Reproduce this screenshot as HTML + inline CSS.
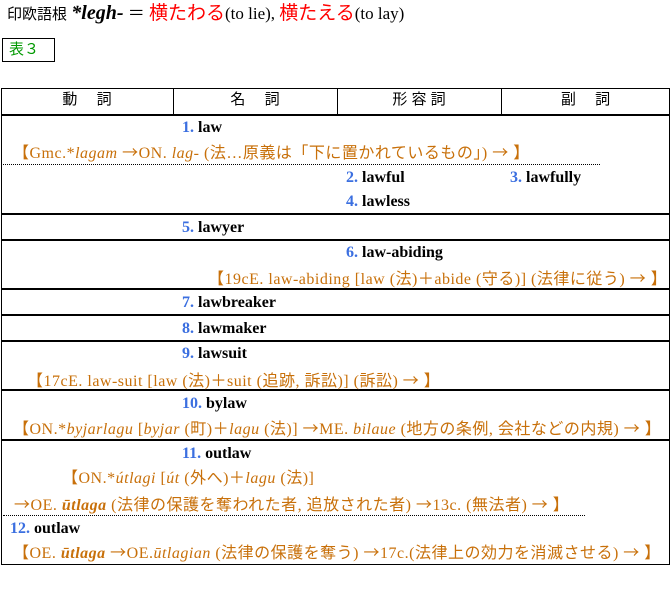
<!DOCTYPE html>
<html><head><meta charset="utf-8"><style>
body{margin:0;width:672px;height:615px;background:#fff;position:relative;font-family:"Liberation Serif","Noto Sans CJK JP",serif;overflow:hidden}
.a{position:absolute;white-space:nowrap;font-size:16px;line-height:16px}
.g{font-family:"Liberation Sans","Noto Sans CJK JP",sans-serif}
.r{font-family:"Noto Sans CJK JP",sans-serif;font-style:normal}
.o{color:#c8700a;font-size:16px;letter-spacing:0.5px}
.n{color:#3b6fe0;font-weight:bold}
.b{font-weight:bold;color:#000}
.h{position:absolute;left:1px;width:669px;border-top:2px solid #000}
.v{position:absolute;top:88px;height:27px;border-left:1.5px solid #000}
.d{position:absolute;border-top:1px dotted #000;height:0}
.hd{position:absolute;top:92px;font-size:15px;line-height:16px;text-align:center}
</style></head><body>
<div class="a" style="left:7px;top:3px;font-size:17px;line-height:20px"><span class="g" style="font-size:15px">印欧語根</span> <b><i style="font-size:20px">*legh-</i></b> <span class="g">＝</span> <span style="color:#f00;font-size:19px" class="g">横たわる</span>(to lie), <span style="color:#f00;font-size:19px" class="g">横たえる</span>(to lay)</div>
<div style="position:absolute;left:2px;top:38px;width:53px;height:24px;border:1px solid #000;box-sizing:border-box"></div>
<div class="a g" style="left:9px;top:42px;color:#090;font-size:15px">表３</div>
<div style="position:absolute;left:1px;top:88px;width:669px;height:477px;border:1.5px solid #000;box-sizing:border-box"></div>
<div class="v" style="left:173px"></div><div class="v" style="left:337px"></div><div class="v" style="left:501px"></div>
<div class="hd g" style="left:1px;width:172px">動　 詞</div>
<div class="hd g" style="left:173px;width:164px">名　 詞</div>
<div class="hd g" style="left:337px;width:164px">形 容 詞</div>
<div class="hd g" style="left:501px;width:169px">副　 詞</div>
<div class="h" style="top:114px"></div>
<div class="h" style="top:213px"></div>
<div class="h" style="top:239px"></div>
<div class="h" style="top:288px"></div>
<div class="h" style="top:314px"></div>
<div class="h" style="top:340px"></div>
<div class="h" style="top:389px"></div>
<div class="h" style="top:439px"></div>
<div class="d" style="left:3px;width:597px;top:164px"></div>
<div class="d" style="left:3px;width:582px;top:515px"></div>

<div class="a" style="left:182px;top:120px"><span class="n">1.</span> <span class="b">law</span></div>
<div class="a o" style="left:13px;top:143px">【Gmc.*<i>lagam</i> <span class="r">→</span>ON. <i>lag-</i> (法…原義は「下に置かれているもの」) <span class="r">→</span> 】</div>
<div class="a" style="left:346px;top:170px"><span class="n">2.</span> <span class="b">lawful</span></div>
<div class="a" style="left:510px;top:170px"><span class="n">3.</span> <span class="b">lawfully</span></div>
<div class="a" style="left:346px;top:194px"><span class="n">4.</span> <span class="b">lawless</span></div>
<div class="a" style="left:182px;top:220px"><span class="n">5.</span> <span class="b">lawyer</span></div>
<div class="a" style="left:346px;top:245px"><span class="n">6.</span> <span class="b">law-abiding</span></div>
<div class="a o" style="left:208px;top:269px">【19cE. law-abiding [law (法)＋abide (守る)] (法律に従う) <span class="r">→</span> 】</div>
<div class="a" style="left:182px;top:295px"><span class="n">7.</span> <span class="b">lawbreaker</span></div>
<div class="a" style="left:182px;top:321px"><span class="n">8.</span> <span class="b">lawmaker</span></div>
<div class="a" style="left:182px;top:346px"><span class="n">9.</span> <span class="b">lawsuit</span></div>
<div class="a o" style="left:27px;top:371px">【17cE. law-suit [law (法)＋suit (追跡, 訴訟)] (訴訟) <span class="r">→</span> 】</div>
<div class="a" style="left:182px;top:396px"><span class="n">10.</span> <span class="b">bylaw</span></div>
<div class="a o" style="left:13px;top:419px">【ON.*<i>byjarlagu</i> [<i>byjar</i> (町)＋<i>lagu</i> (法)] <span class="r">→</span>ME. <i>bilaue</i> (地方の条例, 会社などの内規) <span class="r">→</span> 】</div>
<div class="a" style="left:182px;top:446px"><span class="n">11.</span> <span class="b">outlaw</span></div>
<div class="a o" style="left:62px;top:471px">【ON.*<i>útlagi</i> [<i>út</i> (外へ)＋<i>lagu</i> (法)]</div>
<div class="a o" style="left:14px;top:495px"><span class="r">→</span>OE. <b><i>ūtlaga</i></b> (法律の保護を奪われた者, 追放された者) <span class="r">→</span>13c. (無法者) <span class="r">→</span> 】</div>
<div class="a" style="left:10px;top:521px"><span class="n">12.</span> <span class="b">outlaw</span></div>
<div class="a o" style="left:13px;top:543px">【OE. <b><i>ūtlaga</i></b> <span class="r">→</span>OE.<i>ūtlagian</i> (法律の保護を奪う) <span class="r">→</span>17c.(法律上の効力を消滅させる) <span class="r">→</span> 】</div>
</body></html>
